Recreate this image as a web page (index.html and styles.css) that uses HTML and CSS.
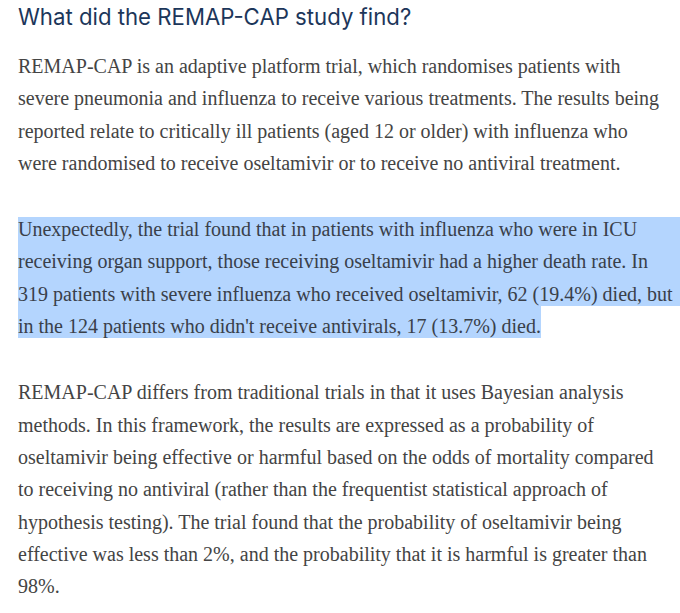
FILE: index.html
```html
<!DOCTYPE html>
<html lang="en">
<head>
<meta charset="utf-8">
<title>What did the REMAP-CAP study find?</title>
<link rel="stylesheet" href="styles.css">
</head>
<body>
<article class="article">
  <h2 class="article__title">What did the REMAP-CAP study find?</h2>
  <p class="article__para">REMAP-CAP is an adaptive platform trial, which randomises patients with<br>
  severe pneumonia and influenza to receive various treatments. The results being<br>
  reported relate to critically ill patients (aged 12 or older) with influenza who<br>
  were randomised to receive oseltamivir or to receive no antiviral treatment.</p>
  <p class="article__para article__para--selected">Unexpectedly, the trial found that in patients with influenza who were in ICU<br>
  receiving organ support, those receiving oseltamivir had a higher death rate. In<br>
  319 patients with severe influenza who received oseltamivir, 62 (19.4%) died, but<br>
  <span class="selection-tail">in the 124 patients who didn't receive antivirals, 17 (13.7%) died.</span></p>
  <p class="article__para">REMAP-CAP differs from traditional trials in that it uses Bayesian analysis<br>
  methods. In this framework, the results are expressed as a probability of<br>
  oseltamivir being effective or harmful based on the odds of mortality compared<br>
  to receiving no antiviral (rather than the frequentist statistical approach of<br>
  hypothesis testing). The trial found that the probability of oseltamivir being<br>
  effective was less than 2%, and the probability that it is harmful is greater than<br>
  98%.</p>
</article>
</body>
</html>
```

FILE: styles.css
```css
html, body {
  margin: 0;
  padding: 0;
  background: #ffffff;
}

.article {
  padding: 2px 0 0 18px;
  overflow: hidden;
}

.article__title {
  margin: 0 0 18px 0;
  font-family: "Inter", "DejaVu Sans", sans-serif;
  font-weight: 400;
  font-size: 22.2px;
  line-height: 30px;
  color: #1c365a;
}

.article__para {
  margin: 0 -60px 34px 0;
  font-family: "Liberation Serif", "Times New Roman", serif;
  font-size: 20px;
  line-height: 32.3px;
  color: #444444;
}

.article__para--selected {
  background-image: linear-gradient(#b4d5fe, #b4d5fe);
  background-repeat: no-repeat;
  background-position: 0 4px;
  background-size: 100% 89px;
  color: #39404a;
}

.selection-tail {
  background: #b4d5fe;
  padding: 9px 0 1px 0;
}
```
